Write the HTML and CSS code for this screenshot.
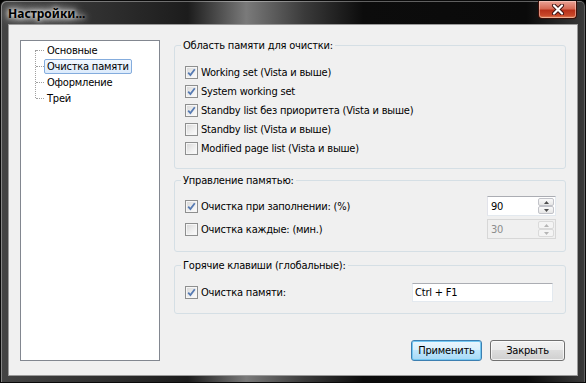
FILE: index.html
```html
<!DOCTYPE html>
<html lang="ru">
<head>
<meta charset="utf-8">
<title>Настройки...</title>
<link rel="stylesheet" href="styles.css">
</head>
<body>
<div class="window">
  <div class="titlebar">
    <span class="title">Настройки...</span>
    <div class="close">
      <svg width="16" height="11" viewBox="0 0 16 11"><path d="M4 1.5 L12 9.5 M12 1.5 L4 9.5" stroke="#3a1010" stroke-width="4" stroke-linecap="round"/><path d="M4 1.5 L12 9.5 M12 1.5 L4 9.5" stroke="#fff" stroke-width="2.2" stroke-linecap="round"/></svg>
    </div>
  </div>
  <div class="client">
    <div class="tree">
      <ul class="tree-list">
        <li class="tree-item"><span class="conn"></span><span class="tree-label">Основные</span></li>
        <li class="tree-item"><span class="conn"></span><span class="tree-label selected">Очистка памяти</span></li>
        <li class="tree-item"><span class="conn"></span><span class="tree-label">Оформление</span></li>
        <li class="tree-item"><span class="conn"></span><span class="tree-label">Трей</span></li>
      </ul>
    </div>
    <div class="main">
      <div class="group group-areas">
        <span class="group-title">Область памяти для очистки:</span>
        <label class="check-row"><span class="cb checked"></span><span>Working set (Vista и выше)</span></label>
        <label class="check-row"><span class="cb checked"></span><span>System working set</span></label>
        <label class="check-row"><span class="cb checked"></span><span>Standby list без приоритета (Vista и выше)</span></label>
        <label class="check-row"><span class="cb"></span><span>Standby list (Vista и выше)</span></label>
        <label class="check-row"><span class="cb"></span><span>Modified page list (Vista и выше)</span></label>
      </div>
      <div class="group group-mem">
        <span class="group-title">Управление памятью:</span>
        <div class="opt-row">
          <label class="check-row"><span class="cb checked"></span><span>Очистка при заполнении: (%)</span></label>
          <div class="spin"><span class="spin-val">90</span><span class="spin-btns"><span class="spin-btn"><svg width="5" height="3" viewBox="0 0 5 3"><path d="M0 3 L2.5 0 L5 3Z" fill="#4d4d4d"/></svg></span><span class="spin-btn"><svg width="5" height="3" viewBox="0 0 5 3"><path d="M0 0 L2.5 3 L5 0Z" fill="#4d4d4d"/></svg></span></span></div>
        </div>
        <div class="opt-row">
          <label class="check-row"><span class="cb"></span><span>Очистка каждые: (мин.)</span></label>
          <div class="spin disabled"><span class="spin-val">30</span><span class="spin-btns"><span class="spin-btn"><svg width="5" height="3" viewBox="0 0 5 3"><path d="M0 3 L2.5 0 L5 3Z" fill="#b5b5b5"/></svg></span><span class="spin-btn"><svg width="5" height="3" viewBox="0 0 5 3"><path d="M0 0 L2.5 3 L5 0Z" fill="#b5b5b5"/></svg></span></span></div>
        </div>
      </div>
      <div class="group group-hot">
        <span class="group-title">Горячие клавиши (глобальные):</span>
        <div class="opt-row">
          <label class="check-row"><span class="cb checked"></span><span>Очистка памяти:</span></label>
          <div class="hotkey">Ctrl + F1</div>
        </div>
      </div>
      <div class="buttons">
        <button class="btn default">Применить</button>
        <button class="btn">Закрыть</button>
      </div>
    </div>
  </div>
</div>
</body>
</html>
```

FILE: styles.css
```css
* { box-sizing: border-box; }
html, body { margin: 0; padding: 0; }
body {
  width: 586px;
  height: 383px;
  overflow: hidden;
  background: #000;
  font-family: "DejaVu Sans Condensed", "DejaVu Sans", sans-serif;
  font-size: 11px;
  letter-spacing: -0.2px;
  color: #000;
}
.window {
  width: 586px;
  height: 383px;
  display: flex;
  flex-direction: column;
  background: linear-gradient(90deg, #444 0%, #2c2c2c 20%, #1c1c1c 32%, #7a7a7a 42%, #3a3a3a 52%, #0c0c0c 62%, #0a0a0a 90%, #3a3a3a 100%);
  border: 1px solid #0a0a0a;
  border-radius: 6px 6px 0 0;
  box-shadow: inset 1px 1px 0 rgba(255,255,255,.35), inset -1px 0 0 rgba(255,255,255,.2);
}
.titlebar {
  height: 23px;
  flex: none;
  display: flex;
  align-items: flex-start;
  padding-left: 7px;
}
.title {
  font-family: "Noto Sans", "DejaVu Sans", sans-serif;
  font-weight: bold;
  font-size: 12px;
  letter-spacing: 0;
  line-height: 14px;
  margin-top: 6px;
  color: #000;
  text-shadow: 0 0 4px #fff, 0 0 8px #fff, 0 0 12px rgba(255,255,255,.8);
}
.close {
  margin-left: auto;
  margin-right: 8px;
  width: 39px;
  height: 18px;
  border: 1px solid #3b0f08;
  border-top: none;
  border-radius: 0 0 4px 4px;
  background: linear-gradient(180deg, #eaa396 0%, #d66a55 45%, #b8311a 55%, #c9482a 85%, #e2895c 100%);
  box-shadow: inset 0 0 0 1px rgba(255,220,210,.5);
  display: flex;
  align-items: center;
  justify-content: center;
}
.client {
  flex: 1;
  margin: 0 7px 6px 7px;
  background: #f0f0f0;
  border: 1px solid #9a9a9a;
  display: flex;
  align-items: flex-start;
  padding: 15px 10px 0 11px;
  gap: 14px;
}
.tree {
  width: 140px;
  height: 321px;
  flex: none;
  background: #fff;
  border: 1px solid #828790;
  padding-top: 1px;
}
.tree-list {
  list-style: none;
  margin: 0;
  padding: 0 0 0 14px;
  position: relative;
}
.tree-list::before {
  content: "";
  position: absolute;
  left: 14px;
  top: 8px;
  bottom: 8px;
  border-left: 1px dotted #a0a0a0;
}
.tree-item {
  height: 16px;
  display: flex;
  align-items: center;
}
.conn {
  width: 8px;
  height: 1px;
  border-top: 1px dotted #a0a0a0;
  margin-left: 1px;
  flex: none;
}
.tree-label {
  height: 15px;
  line-height: 13px;
  padding: 0 2px;
  border: 1px solid transparent;
}
.tree-label.selected {
  border-color: #84acdd;
  border-radius: 2px;
  background: linear-gradient(180deg, #f2f8fe, #dcebfc);
}
.main {
  width: 392px;
  flex: none;
  display: flex;
  flex-direction: column;
}
.group {
  border: 1px solid #d5dfe5;
  border-radius: 3px;
  position: relative;
  display: flex;
  flex-direction: column;
}
.group-title {
  position: absolute;
  top: -7px;
  left: 6px;
  padding: 0 2px;
  background: #f0f0f0;
  line-height: 13px;
}
.group-areas {
  margin-top: 5px;
  height: 124px;
  padding: 17px 10px 0 10px;
}
.group-mem {
  margin-top: 11px;
  height: 72px;
  padding: 15px 9px 0 10px;
  gap: 3px;
}
.group-hot {
  margin-top: 13px;
  height: 49px;
  padding: 16px 12px 0 10px;
}
.check-row {
  height: 19px;
  display: flex;
  align-items: center;
  gap: 3px;
  white-space: nowrap;
}
.cb {
  width: 13px;
  height: 13px;
  flex: none;
  border: 1px solid #8e8f8f;
  background: linear-gradient(135deg, #d6d6d6 0%, #eeeeee 55%, #fdfdfd 100%);
  box-shadow: inset 0 0 0 1px #f6f6f6;
}
.cb.checked {
  background: url("data:image/svg+xml;utf8,<svg xmlns='http://www.w3.org/2000/svg' width='11' height='11' viewBox='0 0 11 11'><path d='M2.2 5.6 L4.4 8 L8.8 2.2' fill='none' stroke='%23577bb3' stroke-width='1.8'/></svg>") center/11px 11px no-repeat, linear-gradient(135deg, #d6d6d6 0%, #eeeeee 55%, #fdfdfd 100%);
}
.opt-row {
  height: 20px;
  display: flex;
  align-items: center;
  justify-content: space-between;
}
.spin {
  width: 69px;
  height: 20px;
  border: 1px solid #abadb3;
  border-color: #abadb3 #e3e9ef #e3e9ef #e2e3ea;
  background: #fff;
  display: flex;
  align-items: center;
  padding: 1px 1px 1px 3px;
}
.spin-val { flex: 1; }
.spin-btns {
  width: 16px;
  height: 16px;
  display: flex;
  flex-direction: column;
}
.spin-btn {
  flex: 1;
  border: 1px solid #c2c3c9;
  border-radius: 2px;
  background: linear-gradient(180deg, #fafafa, #e6e6e6);
  display: flex;
  align-items: center;
  justify-content: center;
}
.spin.disabled { background: #f0f0f0; color: #8d8d8d; border-color: #d7d7d7; }
.spin.disabled .spin-btn { border-color: #dadada; background: #f4f4f4; }
.hotkey {
  width: 141px;
  height: 19px;
  background: #fff;
  border: 1px solid #e3e9ef;
  border-top-color: #abadb3;
  padding: 0 2px;
  line-height: 17px;
}
.buttons {
  margin-top: 26px;
  display: flex;
  justify-content: flex-end;
  gap: 8px;
  padding-right: 1px;
}
.btn {
  height: 21px;
  font: inherit;
  letter-spacing: -0.2px;
  color: #000;
  border: 1px solid #707070;
  border-radius: 3px;
  background: linear-gradient(180deg, #f2f2f2 0%, #ebebeb 49%, #dddddd 50%, #cfcfcf 100%);
  box-shadow: inset 0 0 0 1px rgba(255,255,255,.7);
  padding: 0;
  width: 75px;
}
.btn.default {
  width: 71px;
  border-color: #3c7fb1;
  background: linear-gradient(180deg, #eaf6fd 0%, #d9f0fc 49%, #bee6fd 50%, #a7d9f5 100%);
  box-shadow: inset 0 0 0 1px #74c8f2;
}
```
